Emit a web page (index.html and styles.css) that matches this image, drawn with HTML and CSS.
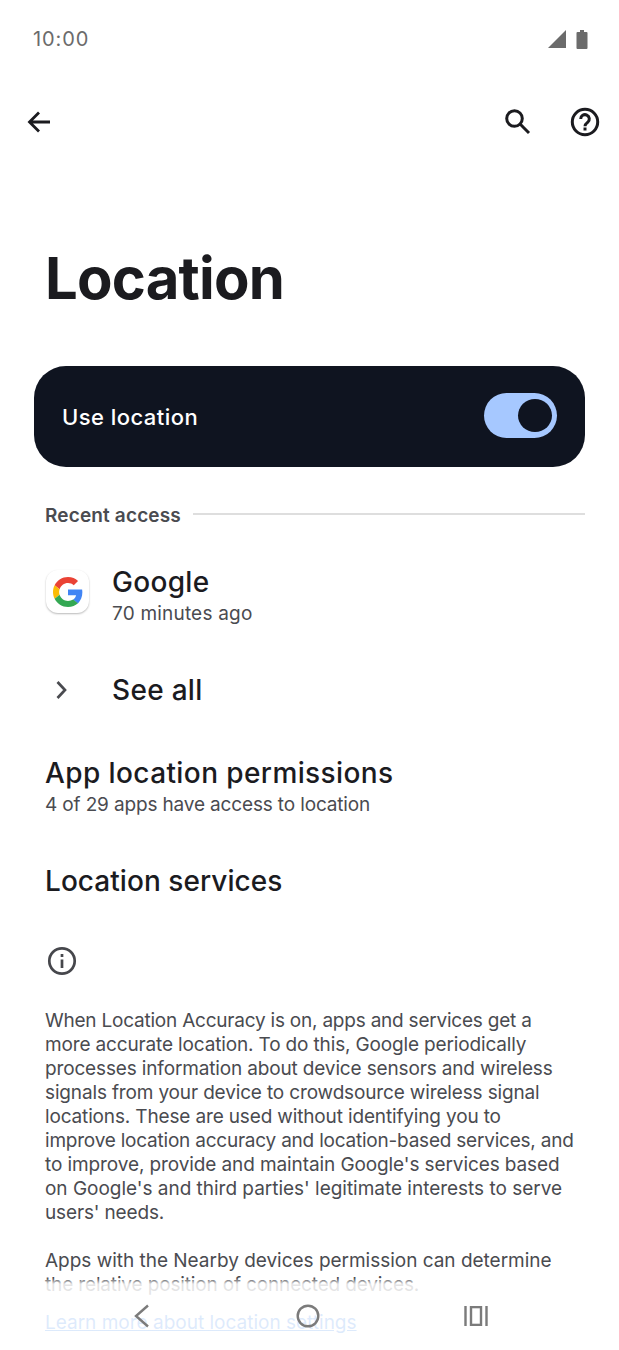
FILE: index.html
```html
<!DOCTYPE html>
<html lang="en">
<head>
<meta charset="utf-8">
<title>Location</title>
<link rel="stylesheet" href="styles.css">
</head>
<body>
<div class="screen">
  <div class="status">
    <span class="time">10:00</span>
    <span class="status-icons">
      <svg class="sig" width="18" height="18" viewBox="0 0 18 18"><path d="M0 18 18 0V18Z" fill="#6b6b6b"/></svg>
      <svg class="bat" width="12" height="19" viewBox="0 0 12 19"><path d="M4 0H8V2H10.5A1 1 0 0 1 11.5 3V18A1 1 0 0 1 10.5 19H1.5A1 1 0 0 1 .5 18V3A1 1 0 0 1 1.5 2H4Z" fill="#6b6b6b"/></svg>
    </span>
  </div>
  <div class="toolbar">
    <svg class="back" width="26" height="26" viewBox="0 0 26 26" fill="none" stroke="#1b1b1f" stroke-width="2.8"><path d="M24 13H4M13 3.500 3.500 13 13 22.500"/></svg>
    <span class="tools">
      <svg width="28" height="28" viewBox="0 0 28 28" fill="none" stroke="#1b1b1f" stroke-width="3"><circle cx="10.500" cy="10.500" r="7.800"/><path d="M16.300 16.300 25 25"/></svg>
      <svg width="30" height="30" viewBox="0 0 30 30" fill="none" stroke="#1b1b1f" stroke-width="3"><circle cx="15" cy="15" r="12.700"/><path d="M10.700 12a4.300 4.300 0 1 1 7 3.300c-1.700 1.300-2.700 2-2.700 4"/><path d="M15 20.500V23.500"/></svg>
    </span>
  </div>
  <h1 class="title">Location</h1>
  <div class="master">
    <span class="master-label">Use location</span>
    <span class="switch"><span class="thumb"></span></span>
  </div>
  <div class="section-head">
    <span class="section-label">Recent access</span>
    <span class="rule"></span>
  </div>
  <div class="row row-google">
    <span class="slot">
      <span class="app-icon">
        <svg width="30" height="30" viewBox="0 0 48 48"><path fill="#ea4335" d="M24 9.500c3.540 0 6.710 1.220 9.210 3.600l6.850-6.850C35.900 2.380 30.470 0 24 0 14.620 0 6.510 5.380 2.560 13.220l7.980 6.190C12.430 13.720 17.740 9.500 24 9.500z"/><path fill="#4285f4" d="M46.980 24.550c0-1.570-.15-3.090-.38-4.550H24v9.020h12.940c-.58 2.960-2.260 5.480-4.780 7.180l7.730 6c4.510-4.180 7.090-10.360 7.090-17.650z"/><path fill="#fbbc05" d="M10.530 28.590c-.48-1.450-.76-2.990-.76-4.590s.270-3.140.760-4.590l-7.980-6.190C.92 16.460 0 20.120 0 24c0 3.880.92 7.540 2.560 10.780l7.970-6.190z"/><path fill="#34a853" d="M24 48c6.480 0 11.930-2.130 15.890-5.810l-7.730-6c-2.150 1.450-4.920 2.300-8.160 2.300-6.260 0-11.570-4.220-13.470-9.910l-7.980 6.190C6.510 42.620 14.620 48 24 48z"/></svg>
      </span>
    </span>
    <div class="row-text">
      <div class="row-title">Google</div>
      <div class="row-sub sub-time">70 minutes ago</div>
    </div>
  </div>
  <div class="row row-see">
    <span class="slot">
      <svg class="chev" width="14" height="20" viewBox="0 0 14 20" fill="none" stroke="#4a4b50" stroke-width="2.7"><path d="M2.500 2 10 10 2.500 18"/></svg>
    </span>
    <div class="row-title">See all</div>
  </div>
  <div class="pref pref-perm">
    <div class="row-title title-perm">App location permissions</div>
    <div class="row-sub sub-count">4 of 29 apps have access to location</div>
  </div>
  <div class="pref pref-services">
    <div class="row-title title-services">Location services</div>
  </div>
  <svg class="info" width="30" height="30" viewBox="0 0 30 30" fill="none" stroke="#46474c" stroke-width="2.700"><circle cx="15" cy="15" r="12.700"/><path d="M15 13.500V22M15 8V11"/></svg>
  <p class="foot foot-1"><span class="l-tight">When Location Accuracy is on, apps and services get a</span><br>more accurate location. To do this, Google periodically<br>processes information about device sensors and wireless<br>signals from your device to crowdsource wireless signal<br>locations. These are used without identifying you to<br><span class="l-tight">improve location accuracy and location-based services, and</span><br><span class="l-mid">to improve, provide and maintain Google's services based</span><br><span class="l-loose">on Google's and third parties' legitimate interests to serve</span><br>users' needs.</p>
  <p class="foot foot-2"><span class="l-loose">Apps with the Nearby devices permission can determine</span><br>the relative position of connected devices.</p>
  <a class="learn" href="#">Learn more about location settings</a>
  <div class="fade"></div>
  <nav class="nav">
    <svg width="18" height="24" viewBox="0 0 18 24" fill="none" stroke="#7b7b7b" stroke-width="2.400"><path d="M15 1.500 3 12 15 22.500"/></svg>
    <svg width="24" height="24" viewBox="0 0 24 24" fill="none" stroke="#7b7b7b" stroke-width="2.400"><circle cx="12" cy="12" r="10.300"/></svg>
    <svg width="24" height="20" viewBox="0 0 24 20" fill="none" stroke="#7b7b7b" stroke-width="2.400"><path d="M1.500 0V20M22.500 0V20"/><rect x="7" y="1.100" width="10" height="17.800"/></svg>
  </nav>
</div>
</body>
</html>
```

FILE: styles.css
```css
* { box-sizing: border-box; }
html, body { margin: 0; padding: 0; background: #fff; }
body { font-family: Inter, "Noto Sans", sans-serif; color: #1b1b1f; }
.screen { position: relative; width: 619px; height: 1350px; overflow: hidden; background: #fff; }

.status { display: flex; justify-content: space-between; align-items: center; height: 38px; margin-top: 20px; padding: 0 31px 0 33px; }
.time { font-size: 20px; color: #6b6b6b; letter-spacing: .9px; line-height: 38px; }
.status-icons { display: flex; align-items: center; gap: 10px; }
.toolbar { display: flex; justify-content: space-between; align-items: center; height: 42px; margin-top: 43px; padding: 0 19px 0 26px; }
.tools { display: flex; align-items: center; gap: 38px; }

.title { margin: 101px 0 0; padding-left: 45px; height: 101px; font-size: 58px; line-height: 68px; font-weight: 700; letter-spacing: -.8px; }

.master { display: flex; justify-content: space-between; align-items: center; height: 101px; margin: 21px 34px 0; padding: 0 28px; background: #0f1420; border-radius: 32px; }
.master-label { color: #fff; font-size: 22px; font-weight: 500; letter-spacing: .45px; }
.switch { display: block; width: 73px; height: 45px; margin-top: -2px; padding: 6px; border-radius: 23px; background: #a6c8ff; }
.thumb { display: block; width: 34px; height: 33px; margin-left: 28px; border-radius: 50%; background: #0f1420; }

.section-head { display: flex; align-items: center; gap: 12px; margin: 36px 34px 0 45px; height: 24px; }
.section-label { font-size: 19px; font-weight: 600; color: #4a4b50; letter-spacing: .15px; }
.rule { flex: 1; height: 1.500px; background: #dedede; margin-top: -2px; }

.row { display: flex; align-items: center; padding-left: 45px; }
.slot { display: flex; width: 67px; flex: none; }
.row-google { margin-top: 35px; height: 67px; }
.app-icon { display: flex; align-items: center; justify-content: center; width: 43px; height: 43px; margin: 0 0 8px 1px; border-radius: 12px; background: #fff; box-shadow: 0 1px 2px rgba(0,0,0,.28); }
.row-title { font-size: 28px; line-height: 34px; font-weight: 500; color: #1b1b1f; letter-spacing: .3px; }
.title-perm { letter-spacing: .4px; }
.title-services { letter-spacing: .05px; }
.row-sub { margin-top: 1px; font-size: 19px; line-height: 27px; color: #4a4b50; }
.sub-time { letter-spacing: .2px; }
.sub-count { letter-spacing: -.15px; }
.row-see { margin-top: 36px; height: 50px; }
.chev { margin-left: 10px; }
.pref { padding-left: 45px; }
.pref-perm { margin-top: 41px; }
.pref-services { margin-top: 46px; }
.info { display: block; margin: 48px 0 0 47px; }
.foot { margin: 0; padding-left: 45px; font-size: 19px; line-height: 24px; color: #4a4b50; white-space: nowrap; letter-spacing: -.15px; }
.foot-1 { margin-top: 33px; }
.foot-2 { margin-top: 24px; }
.l-tight { letter-spacing: -.22px; }
.l-mid { letter-spacing: -.1px; }
.l-loose { letter-spacing: -.02px; }
.learn { display: block; margin: 13px 0 0 45px; font-size: 19px; line-height: 26px; color: #1a73e8; text-decoration: underline; }

.fade { position: absolute; left: 0; right: 0; bottom: 0; height: 72px; background: linear-gradient(to bottom, rgba(255,255,255,0) 0, rgba(255,255,255,.85) 6px, rgba(255,255,255,.85) 100%); }
.nav { position: absolute; left: 133px; bottom: 22px; width: 355px; display: flex; justify-content: space-between; align-items: center; }
```
